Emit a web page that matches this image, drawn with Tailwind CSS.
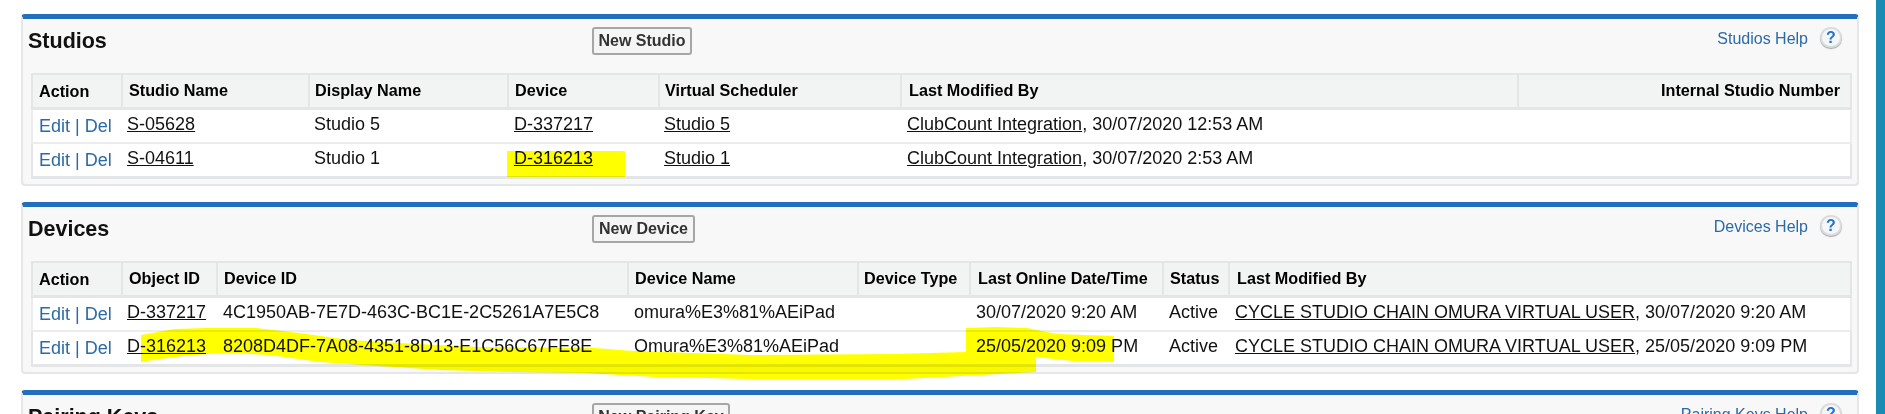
<!DOCTYPE html>
<html lang="en">
<head>
  <meta charset="UTF-8" />
  <title>Studios and Devices</title>
  <script src="https://cdn.jsdelivr.net/npm/@tailwindcss/browser@4"></script>
</head>
<body class="relative h-[414px] overflow-hidden bg-white font-['Liberation_Sans',Arial,sans-serif] text-[18px] text-[#111]">

  <!-- right edge of the window behind the page -->
  <div class="absolute right-0 top-0 h-full w-[9px] bg-[#1a8cb4]"></div>

  <div class="ml-[21px] w-[1838px] pt-[14px]">

    <!-- Studios -->
    <section class="h-[172px] rounded-[4px] border-x-2 border-b-2 border-t-[5px] border-x-[#e4e6e8] border-b-[#e4e6e8] border-t-[#236fbd] bg-[#f8f8f8]">
      <div class="relative flex h-[54px]">
        <h2 class="ml-[5px] mt-[9px] text-[21.5px] font-bold leading-[26px]">Studios</h2>
        <button class="absolute left-[569px] top-[8px] h-[28px] w-[100px] rounded-[3px] border-2 border-[#a6a6a6] bg-[#f5f5f5] text-[16px] font-bold text-[#333]">New Studio</button>
        <div class="ml-auto mr-[15px] mt-[8px] flex items-center gap-[12px] self-start">
          <a class="text-[16px] text-[#2a6aa8]">Studios Help</a>
          <span class="mb-[3px] flex h-[21px] w-[22px] items-center justify-center rounded-full border-2 border-[#d8dcdf] bg-[#f4f6f7] text-[16px] font-bold text-[#2a72c9] shadow-[0_1px_1px_#aaa]">?</span>
        </div>
      </div>
      <table class="ml-[8px] w-[1819px] table-fixed border-collapse bg-white">
        <colgroup><col class="w-[90px]" /><col class="w-[187px]" /><col class="w-[199px]" /><col class="w-[151px]" /><col class="w-[242px]" /><col class="w-[617px]" /><col class="w-[333px]" /></colgroup>
        <thead class="bg-[#f2f3f3] text-[16.2px] font-bold text-black">
          <tr class="h-[34px] border-x-2 border-t-2 border-b-[3px] border-[#e3e5e7]">
            <th class="border-r-2 border-[#e3e5e7] px-[6px] pt-[1px] text-left">Action</th>
            <th class="border-r-2 border-[#e3e5e7] px-[6px] pb-[2px] text-left">Studio Name</th>
            <th class="border-r-2 border-[#e3e5e7] px-[5px] pb-[2px] text-left">Display Name</th>
            <th class="border-r-2 border-[#e3e5e7] px-[6px] pb-[2px] text-left">Device</th>
            <th class="border-r-2 border-[#e3e5e7] px-[5px] pb-[2px] text-left">Virtual Scheduler</th>
            <th class="border-r-2 border-[#e3e5e7] px-[7px] pb-[2px] text-left">Last Modified By</th>
            <th class="px-[10px] pb-[2px] text-right">Internal Studio Number</th>
          </tr>
        </thead>
        <tbody>
          <tr class="h-[35px] border-x-2 border-b-2 border-[#ebecee]">
            <td class="px-[6px] pt-[1px] text-[#2a6aa8]">Edit | Del</td>
            <td class="px-[5px] pb-[3px] underline">S-05628</td>
            <td class="px-[5px] pb-[3px]">Studio 5</td>
            <td class="px-[6px] pb-[3px] underline">D-337217</td>
            <td class="px-[5px] pb-[3px] underline">Studio 5</td>
            <td class="px-[6px] pb-[3px] whitespace-nowrap"><span class="underline">ClubCount Integration</span>, 30/07/2020 12:53 AM</td>
            <td></td>
          </tr>
          <tr class="h-[34px] border-x-2 border-b-[3px] border-[#e3e5e7]">
            <td class="px-[6px] pt-[1px] text-[#2a6aa8]">Edit | Del</td>
            <td class="px-[5px] pb-[2px] underline">S-04611</td>
            <td class="px-[5px] pb-[2px]">Studio 1</td>
            <td class="px-[6px] pb-[2px] underline">D-316213</td>
            <td class="px-[5px] pb-[2px] underline">Studio 1</td>
            <td class="px-[6px] pb-[2px] whitespace-nowrap"><span class="underline">ClubCount Integration</span>, 30/07/2020 2:53 AM</td>
            <td></td>
          </tr>
        </tbody>
      </table>
    </section>

    <!-- Devices -->
    <section class="mt-[16px] h-[172px] rounded-[4px] border-x-2 border-b-2 border-t-[5px] border-x-[#e4e6e8] border-b-[#e4e6e8] border-t-[#236fbd] bg-[#f8f8f8]">
      <div class="relative flex h-[54px]">
        <h2 class="ml-[5px] mt-[9px] text-[21.5px] font-bold leading-[26px]">Devices</h2>
        <button class="absolute left-[569px] top-[8px] h-[28px] w-[103px] rounded-[3px] border-2 border-[#a6a6a6] bg-[#f5f5f5] text-[16px] font-bold text-[#333]">New Device</button>
        <div class="ml-auto mr-[15px] mt-[8px] flex items-center gap-[12px] self-start">
          <a class="text-[16px] text-[#2a6aa8]">Devices Help</a>
          <span class="mb-[3px] flex h-[21px] w-[22px] items-center justify-center rounded-full border-2 border-[#d8dcdf] bg-[#f4f6f7] text-[16px] font-bold text-[#2a72c9] shadow-[0_1px_1px_#aaa]">?</span>
        </div>
      </div>
      <table class="ml-[8px] w-[1819px] table-fixed border-collapse bg-white">
        <colgroup><col class="w-[90px]" /><col class="w-[95px]" /><col class="w-[411px]" /><col class="w-[230px]" /><col class="w-[112px]" /><col class="w-[193px]" /><col class="w-[66px]" /><col class="w-[622px]" /></colgroup>
        <thead class="bg-[#f2f3f3] text-[16.2px] font-bold text-black">
          <tr class="h-[34px] border-x-2 border-t-2 border-b-[3px] border-[#e3e5e7]">
            <th class="border-r-2 border-[#e3e5e7] px-[6px] pt-[1px] text-left">Action</th>
            <th class="border-r-2 border-[#e3e5e7] px-[6px] pb-[2px] text-left">Object ID</th>
            <th class="border-r-2 border-[#e3e5e7] px-[6px] pb-[2px] text-left">Device ID</th>
            <th class="border-r-2 border-[#e3e5e7] px-[6px] pb-[2px] text-left">Device Name</th>
            <th class="border-r-2 border-[#e3e5e7] px-[5px] pb-[2px] text-left">Device Type</th>
            <th class="border-r-2 border-[#e3e5e7] px-[7px] pb-[2px] text-left">Last Online Date/Time</th>
            <th class="border-r-2 border-[#e3e5e7] px-[6px] pb-[2px] text-left">Status</th>
            <th class="px-[7px] pb-[2px] text-left">Last Modified By</th>
          </tr>
        </thead>
        <tbody>
          <tr class="h-[35px] border-x-2 border-b-2 border-[#ebecee]">
            <td class="px-[6px] pt-[1px] text-[#2a6aa8]">Edit | Del</td>
            <td class="px-[5px] pb-[3px] underline">D-337217</td>
            <td class="px-[6px] pb-[3px] whitespace-nowrap">4C1950AB-7E7D-463C-BC1E-2C5261A7E5C8</td>
            <td class="px-[6px] pb-[3px]">omura%E3%81%AEiPad</td>
            <td></td>
            <td class="px-[6px] pb-[3px] whitespace-nowrap">30/07/2020 9:20 AM</td>
            <td class="px-[6px] pb-[3px]">Active</td>
            <td class="px-[6px] pb-[3px] whitespace-nowrap"><span class="underline">CYCLE STUDIO CHAIN OMURA VIRTUAL USER</span>, 30/07/2020 9:20 AM</td>
          </tr>
          <tr class="h-[34px] border-x-2 border-b-[3px] border-[#e3e5e7]">
            <td class="px-[6px] pt-[1px] text-[#2a6aa8]">Edit | Del</td>
            <td class="px-[5px] pb-[2px] underline">D-316213</td>
            <td class="px-[6px] pb-[2px] whitespace-nowrap">8208D4DF-7A08-4351-8D13-E1C56C67FE8E</td>
            <td class="px-[6px] pb-[2px]">Omura%E3%81%AEiPad</td>
            <td></td>
            <td class="px-[6px] pb-[2px] whitespace-nowrap">25/05/2020 9:09 PM</td>
            <td class="px-[6px] pb-[2px]">Active</td>
            <td class="px-[6px] pb-[2px] whitespace-nowrap"><span class="underline">CYCLE STUDIO CHAIN OMURA VIRTUAL USER</span>, 25/05/2020 9:09 PM</td>
          </tr>
        </tbody>
      </table>
    </section>

    <!-- Pairing Keys, cut off by the window -->
    <section class="mt-[16px] h-[60px] rounded-[4px] border-x-2 border-t-[5px] border-x-[#e4e6e8] border-t-[#236fbd] bg-[#f8f8f8]">
      <div class="relative flex h-[54px]">
        <h2 class="ml-[5px] mt-[9px] text-[21.5px] font-bold leading-[26px]">Pairing Keys</h2>
        <button class="absolute left-[569px] top-[8px] h-[28px] w-[138px] rounded-[3px] border-2 border-[#a6a6a6] bg-[#f5f5f5] text-[16px] font-bold text-[#333]">New Pairing Key</button>
        <div class="ml-auto mr-[15px] mt-[8px] flex items-center gap-[12px] self-start">
          <a class="text-[16px] text-[#2a6aa8]">Pairing Keys Help</a>
          <span class="mb-[3px] flex h-[21px] w-[22px] items-center justify-center rounded-full border-2 border-[#d8dcdf] bg-[#f4f6f7] text-[16px] font-bold text-[#2a72c9] shadow-[0_1px_1px_#aaa]">?</span>
        </div>
      </div>
    </section>
  </div>

  <!-- highlighter marks drawn over the screenshot -->
  <svg class="pointer-events-none absolute left-0 top-0 mix-blend-multiply" width="1885" height="414" fill="#ffff00">
    <rect x="507" y="151" width="118" height="26" />
    <path d="M141 335 L174 329 L206 328 L256 328 L299 333 L349 340 L399 343 L477 347 L595 348 L633 351 L751 355 L893 354 L966 352 L966 328 L996 327 L1027 328 L1057 334 L1114 336 L1114 362 L1073 361 L1036 357 L1036 372 L981 375 L904 379 L747 379 L709 378 L656 377 L584 373 L513 372 L441 370 L377 366 L320 362 L270 355 L227 353 L191 355 L159 359 L141 362 Z" />
  </svg>
</body>
</html>
